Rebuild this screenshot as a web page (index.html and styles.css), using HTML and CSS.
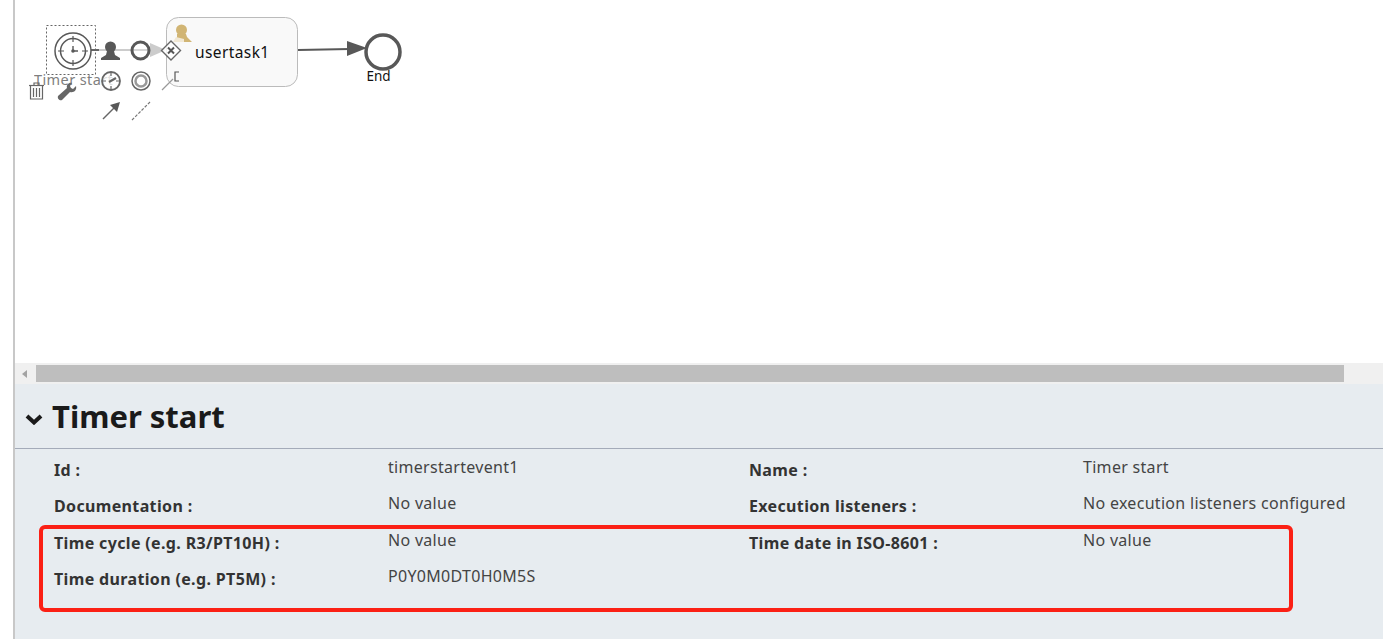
FILE: index.html
```html
<!DOCTYPE html>
<html lang="en">
<head>
<meta charset="utf-8">
<title>Timer start</title>
<link rel="stylesheet" href="styles.css">
</head>
<body>
<div class="page">
  <main class="main">
    <section class="canvas">
      <svg class="diagram" width="1368" height="363" viewBox="15 0 1368 363" xmlns="http://www.w3.org/2000/svg">
        <!-- task -->
        <rect x="166.500" y="17.500" width="131" height="69" rx="12" fill="#f9f9f9" stroke="#bbb" stroke-width="1"/>
        <text x="195" y="58" class="node-label">usertask1</text>
        <circle cx="181.500" cy="30" r="5.500" fill="#d1b574"/>
        <path d="M177 34h9l1 3 5 5h-8l-7-1z" fill="#d1b574"/>
        <path d="M173 42l3-5 8 2v3z" fill="#f1e8d4"/>
        <!-- faded label of the start event -->
        <text x="34" y="85" class="node-label start-label">Timer start</text>
        <!-- flow to task (faded) -->
        <line x1="92" y1="50" x2="152" y2="50" stroke="#ccc" stroke-width="2"/>
        <path d="M150 43l16 7-16 7z" fill="#ccc"/>
        <line x1="91" y1="50" x2="99" y2="50" stroke="#666" stroke-width="2"/>
        <!-- flow to end -->
        <line x1="298" y1="50" x2="350" y2="49" stroke="#585858" stroke-width="2"/>
        <path d="M347 41l20 7-20 8z" fill="#585858"/>
        <circle cx="383" cy="52" r="17" fill="#fff" stroke="#585858" stroke-width="3.500"/>
        <text x="366.500" y="81" class="node-label end-label">End</text>
        <!-- start event -->
        <rect x="46.500" y="25.500" width="49" height="49" fill="none" stroke="#666" stroke-dasharray="2 2"/>
        <circle cx="73" cy="51" r="18" fill="#fff" stroke="#585858" stroke-width="1.500"/>
        <circle cx="73" cy="51" r="12.500" fill="#fff" stroke="#585858" stroke-width="1.500"/>
        <g stroke="#585858" stroke-width="1.200">
          <path d="M73 36v6M73 60v6M58 51h6M82 51h6"/>
          <path d="M73 51v-5M73 51h5" stroke-width="1.400"/>
        </g>
        <circle cx="73" cy="51" r="1.800" fill="#585858"/>
        <!-- context pad -->
        <g fill="#585858">
          <circle cx="110.500" cy="47" r="5.500"/>
          <path d="M107 51h7l1 4 5 3v2h-19v-2l5-3z"/>
        </g>
        <circle cx="140.500" cy="50.500" r="8.500" fill="#fff" fill-opacity=".2" stroke="#585858" stroke-width="3"/>
        <path d="M171 41l9.500 9.500-9.500 9.500-9.500-9.500z" fill="#fff" fill-opacity=".8" stroke="#666" stroke-width="1.400"/>
        <path d="M168 47.500l6 6M174 47.500l-6 6" stroke="#555" stroke-width="2"/>
        <g stroke="#666" fill="none">
          <circle cx="111" cy="81" r="9" fill="#fff" fill-opacity=".75" stroke-width="1.800"/>
          <path d="M111 73v3M111 86v3M103 81h3M116 81h3" stroke-width="1.200"/>
          <path d="M109 82l7-4" stroke-width="2.200"/>
          <circle cx="141" cy="81" r="9" fill="#fff" fill-opacity=".75" stroke-width="1.500"/>
          <circle cx="141" cy="81" r="5.500" stroke-width="2.500" stroke="#999"/>
        </g>
        <path d="M162 90l11-11" stroke="#999" stroke-width="1.200"/>
        <path d="M179 72h-4v9h4" stroke="#555" fill="none" stroke-width="1.200"/>
        <path d="M103 119l13-13" stroke="#666" stroke-width="1.500"/>
        <path d="M120 102l-3 10-7-7z" fill="#585858"/>
        <path d="M132 120l18-18" stroke="#777" stroke-width="1.200" stroke-dasharray="3 1.500"/>
        <!-- trash -->
        <g stroke="#666" fill="none" stroke-width="1.200">
          <path d="M29 85.500h15"/>
          <path d="M34 85v-2h5v2"/>
          <path d="M30.500 86v13h12v-13"/>
          <path d="M33.500 88v9M36.500 88v9M39.500 88v9"/>
        </g>
        <!-- wrench -->
        <path d="M58 96l9-8c-1-3 2-6 5-5l-2 3 1 2 2 1 3-3c1 4-2 7-6 6l-8 8c-2 1-5-1-4-4z" fill="#666"/>
      </svg>
    </section>
    <div class="scrollbar">
      <span class="scroll-arrow"></span>
      <span class="scroll-thumb"></span>
    </div>
    <section class="panel">
      <header class="panel-head">
        <svg class="chevron" width="18" height="12" viewBox="0 0 18 12" xmlns="http://www.w3.org/2000/svg"><path d="M2 3l7 6.500 7-6.500" fill="none" stroke="#1a1a1a" stroke-width="4"/></svg>
        <h1 class="panel-title">Timer start</h1>
      </header>
      <div class="props">
        <div class="label">Id :</div><div class="value">timerstartevent1</div>
        <div class="label">Name :</div><div class="value">Timer start</div>
        <div class="label">Documentation :</div><div class="value">No value</div>
        <div class="label">Execution listeners :</div><div class="value">No execution listeners configured</div>
        <div class="label">Time cycle (e.g. R3/PT10H) :</div><div class="value">No value</div>
        <div class="label">Time date in ISO-8601 :</div><div class="value">No value</div>
        <div class="label">Time duration (e.g. PT5M) :</div><div class="value">P0Y0M0DT0H0M5S</div>
      </div>
      <div class="annotation"></div>
    </section>
  </main>
</div>
</body>
</html>
```
FILE: styles.css
```css
* { box-sizing: border-box; }
html, body { margin: 0; height: 100%; background: #fff; overflow: hidden; }
body { font-family: "Noto Sans", "Open Sans", sans-serif; color: #333; }
.page { width: 1383px; height: 639px; padding-left: 13px; display: flex; }
.main { flex: 1; min-width: 0; border-left: 2px solid #c8c8c8; display: flex; flex-direction: column; position: relative; }
.canvas { height: 363px; background: #fff; overflow: hidden; }
.diagram { display: block; }
.node-label { font-family: "Noto Sans", sans-serif; font-size: 15.500px; letter-spacing: .4px; fill: #111; }
.end-label { font-size: 13.500px; letter-spacing: 0; }
.start-label { font-size: 14.500px; fill: #555; opacity: .75; }
.scrollbar { height: 21px; background: #f0f0f0; display: flex; align-items: center; padding-left: 7px; }
.scroll-arrow { width: 0; height: 0; border-style: solid; border-width: 4.500px 5px 4.500px 0; border-color: transparent #a3a3a3 transparent transparent; }
.scroll-thumb { width: 1308px; height: 17px; margin-left: 9px; background: #bebebe; }
.panel { flex: 1; background: #e7ecf0; position: relative; }
.panel-head { height: 65px; display: flex; align-items: center; gap: 9px; padding-left: 10px; border-bottom: 1px solid #a4abb9; }
.chevron { flex: none; margin-top: 6px; }
.panel-title { margin: 0; font-size: 31px; font-weight: 700; line-height: 1; color: #1a1a1a; }
.props { display: grid; grid-template-columns: 334px 361px 334px 1fr; grid-auto-rows: 36.500px; padding: 1.500px 0 0 39px; font-size: 16px; letter-spacing: .28px; }
.label { font-weight: 700; color: #333; padding-top: 9px; line-height: 20px; letter-spacing: .35px; }
.value { color: #444; padding-top: 6px; line-height: 20px; letter-spacing: .3px; }
.annotation { position: absolute; left: 24px; top: 141px; width: 1254px; height: 87px; border: 4px solid #fb2015; border-radius: 6px; }
```
